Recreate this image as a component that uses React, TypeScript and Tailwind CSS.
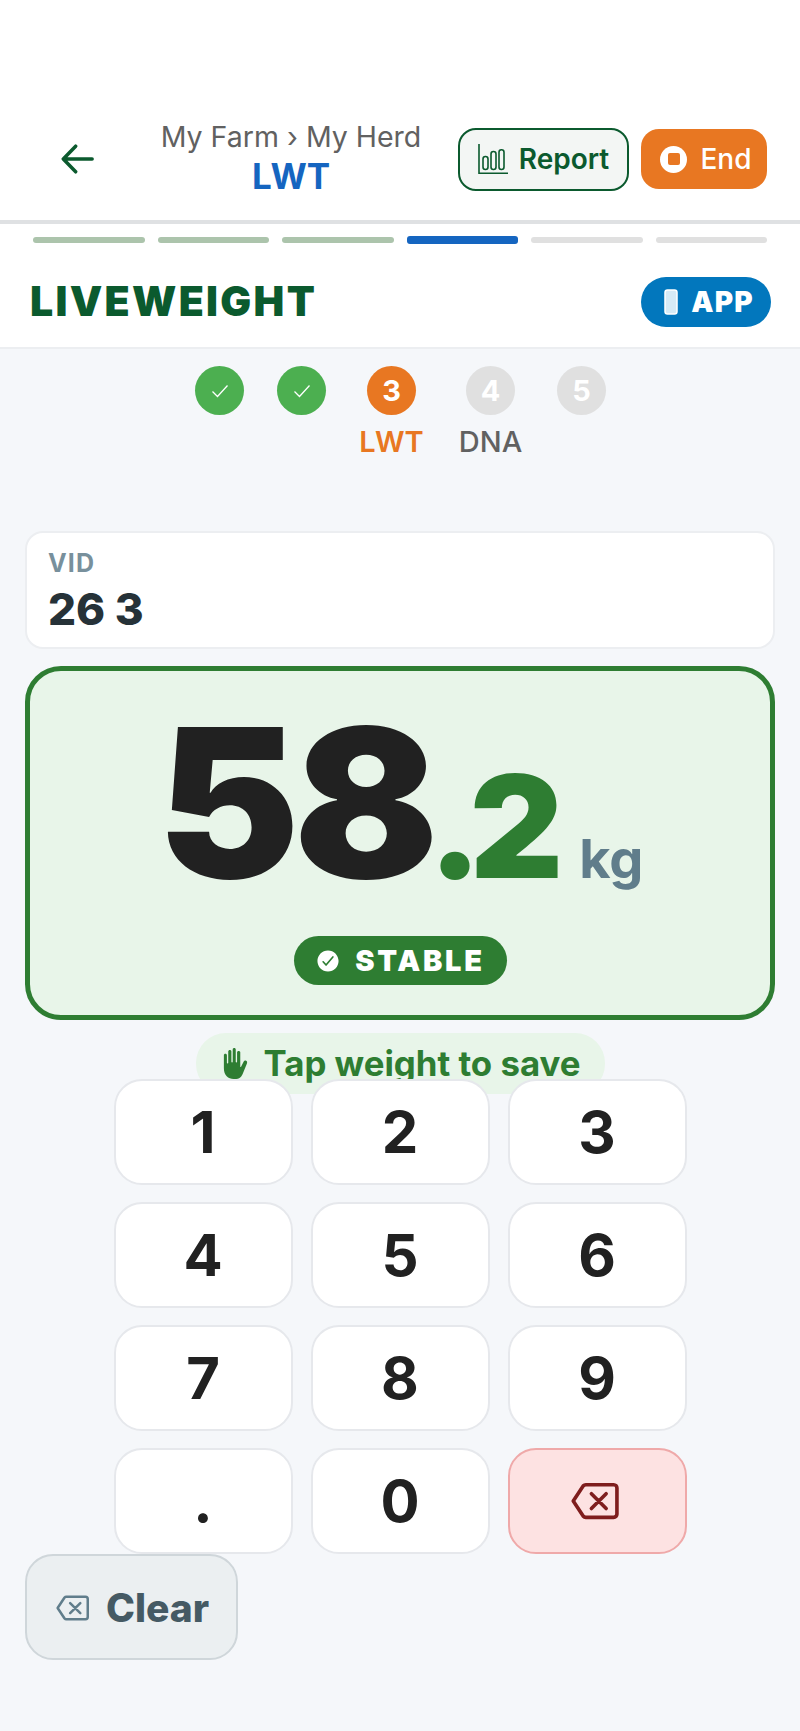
import { IoBackspaceOutline, IoCheckmarkCircle, IoHandLeft } from 'react-icons/io5';

const ink = '#212121';

function ReportIcon() {
  return (
    <svg viewBox="0 0 30 30" fill="none" stroke="currentColor" strokeWidth="1.6" className="h-[30px] w-[30px]">
      <path d="M1 0 V29.2 H30" />
      <rect x="5" y="12.5" width="5" height="13" rx="2.4" />
      <rect x="13" y="7.5" width="5" height="18" rx="2.4" />
      <rect x="21" y="5.8" width="5" height="19.7" rx="2.4" />
    </svg>
  );
}

function DoneCircle() {
  return (
    <div className="flex h-[49px] w-[49px] items-center justify-center rounded-full bg-[#4caf50]">
      <svg viewBox="0 0 20 20" fill="none" stroke="white" strokeWidth="1.3" className="h-[20px] w-[20px]">
        <path d="M2.5 10.5 L7.5 15.5 L17.5 4.5" />
      </svg>
    </div>
  );
}

function StepNum({ n, bg }: { n: number; bg: string }) {
  return (
    <div className={`flex h-[49px] w-[49px] items-center justify-center rounded-full text-[29px] font-bold text-white ${bg}`}>
      {n}
    </div>
  );
}

function Key({ label }: { label: string }) {
  return (
    <button className="flex h-[106px] items-center justify-center rounded-[28px] border-2 border-[#e6e8ec] bg-white text-[58px] font-bold text-[#212121]">
      {label}
    </button>
  );
}

export default function App() {
  const segs = ['done', 'done', 'done', 'active', 'todo', 'todo'];

  return (
    <div className="flex min-h-[1731px] flex-col bg-[#f5f7fa] font-['Inter',sans-serif]" style={{ color: ink }}>
      {/* top bar */}
      <div className="flex h-[224px] items-end border-b-[4px] border-[#dfe1e3] bg-white pb-[21px] pl-[61px] pr-[33px]">
        <div className="flex h-[80px] w-full items-center">
          <svg viewBox="0 0 36 32" fill="none" stroke="#0b5a2e" strokeWidth="3.8" strokeLinecap="round" strokeLinejoin="round" className="h-[32px] w-[33px]">
            <path d="M34 16 H3 M16 2 L2.5 16 L16 30" />
          </svg>
          <div className="-mt-[2px] flex flex-1 flex-col items-center pl-[30px]">
            <div className="text-[28.5px] leading-[36px] text-[#616161]">My Farm › My Herd</div>
            <div className="text-[35px] font-bold leading-[42px] text-[#1565c0]">LWT</div>
          </div>
          <div className="flex items-center gap-[12px]">
            <button className="flex h-[63px] w-[171px] items-center justify-center gap-[11px] rounded-[18px] border-2 border-[#0b5a2e] bg-[#f3f6f4] text-[28px] font-semibold text-[#0b5a2e]">
              <ReportIcon />
              Report
            </button>
            <button className="flex h-[60px] w-[126px] items-center justify-center gap-[13px] rounded-[18px] bg-[#e87722] pl-[4px] text-[28px] font-medium text-white">
              <span className="flex h-[27px] w-[27px] items-center justify-center rounded-full bg-white">
                <span className="h-[12px] w-[12px] rounded-[2px] bg-[#e87722]" />
              </span>
              End
            </button>
          </div>
        </div>
      </div>

      {/* section header */}
      <div className="border-b-2 border-[#eceef1] bg-white">
        <div className="flex gap-[13px] px-[33px] pt-[12px]">
          {segs.map((s, i) => (
            <div key={i} className="flex h-[8px] flex-1 items-center">
              {s === 'active' && <div className="h-[8px] w-full rounded-[3px] bg-[#1565c0]" />}
              {s === 'done' && <div className="h-[6px] w-full rounded-[3px] bg-[#acc4ac]" />}
              {s === 'todo' && <div className="h-[6px] w-full rounded-[3px] bg-[#e0e0e0]" />}
            </div>
          ))}
        </div>
        <div className="flex h-[103px] items-center justify-between pl-[30px] pr-[29px] pt-[12px]">
          <div className="text-[41px] font-black tracking-[2.3px] text-[#0b5a2e]">LIVEWEIGHT</div>
          <div className="flex h-[50px] w-[130px] items-center justify-center gap-[13px] rounded-full bg-[#0277bd] pl-[6px] text-[28px] font-black tracking-[1.2px] text-white">
            <svg viewBox="0 0 14 26" fill="#d5eaf6" stroke="white" strokeWidth="1.5" className="h-[26px] w-[14px]">
              <rect x="1" y="1" width="12" height="24" rx="2.5" />
            </svg>
            APP
          </div>
        </div>
      </div>

      {/* stepper */}
      <div className="flex justify-center pl-[1px] pt-[17px]">
        <div className="flex gap-[33px] pr-[24px]">
          <DoneCircle />
          <DoneCircle />
        </div>
        <div className="ml-[17px] flex w-[49px] flex-col items-center">
          <StepNum n={3} bg="bg-[#e87722]" />
          <div className="mt-[11px] text-[29px] font-semibold leading-[32px] text-[#e87722]">LWT</div>
        </div>
        <div className="ml-[50px] flex w-[49px] flex-col items-center">
          <StepNum n={4} bg="bg-[#e0e0e0]" />
          <div className="mt-[11px] text-[29px] font-medium leading-[32px] text-[#616161]">DNA</div>
        </div>
        <div className="ml-[42px]">
          <StepNum n={5} bg="bg-[#e0e0e0]" />
        </div>
      </div>

      {/* vid */}
      <div className="mx-[25px] mt-[73px] flex h-[118px] flex-col justify-center gap-[8px] rounded-[18px] border-2 border-[#eceef1] bg-white pl-[21px]">
        <div className="text-[25px] font-bold leading-[30px] tracking-[1.2px] text-[#78909c]">VID</div>
        <div className="text-[44px] font-extrabold leading-[46px] text-[#263238]">26 3</div>
      </div>

      {/* weight */}
      <div className="mx-[25px] mt-[17px] flex h-[354px] flex-col items-center rounded-[36px] border-[5px] border-[#2e7d32] bg-[#e8f5e9] pt-[23px]">
        <div className="flex h-[216px] items-baseline leading-none">
          <span className="mr-[8px] inline-block origin-left scale-x-[1.03] text-[208px] font-black leading-[216px] tracking-[-6px] text-[#212121]">58</span>
          <span className="-ml-[4px] inline-block origin-left scale-x-[1.02] text-[142px] font-black leading-[216px] tracking-[-12px] text-[#2e7d32]">.2</span>
          <span className="ml-[30px] text-[54px] font-bold leading-[216px] text-[#607d8b]">kg</span>
        </div>
        <div className="mt-[26px] flex h-[49px] w-[213px] items-center justify-center gap-[14px] rounded-full bg-[#2e7d32] text-[29px] font-black tracking-[2.7px] text-white">
          <IoCheckmarkCircle className="h-[26px] w-[26px]" />
          STABLE
        </div>
      </div>

      {/* hint sits under the keypad */}
      <div className="mt-[13px] flex h-[61px] w-[409px] items-center justify-center gap-[13px] self-center rounded-[30px] bg-[#e8f5e9] text-[34.8px] font-bold text-[#2e7d32]">
        <IoHandLeft className="h-[31px] w-[31px]" />
        Tap weight to save
      </div>

      <div className="relative mx-auto -mt-[15px] grid w-[573px] grid-cols-3 gap-x-[18px] gap-y-[17px]">
        {['1', '2', '3', '4', '5', '6', '7', '8', '9', '.', '0'].map((k) => (
          <Key key={k} label={k} />
        ))}
        <button className="flex h-[106px] items-center justify-center rounded-[28px] border-2 border-[#efa9a9] bg-[#fde2e2] text-[#7f1d1d]">
          <IoBackspaceOutline className="h-[58px] w-[58px]" />
        </button>
      </div>

      <button className="relative ml-[25px] flex h-[106px] w-[213px] items-center justify-center gap-[12px] rounded-[28px] border-2 border-[#cfd6da] bg-[#ebeff1] pt-[2px] text-[39px] font-extrabold text-[#455a64]">
        <IoBackspaceOutline className="h-[40px] w-[40px] text-[#607d8b]" />
        Clear
      </button>
    </div>
  );
}
